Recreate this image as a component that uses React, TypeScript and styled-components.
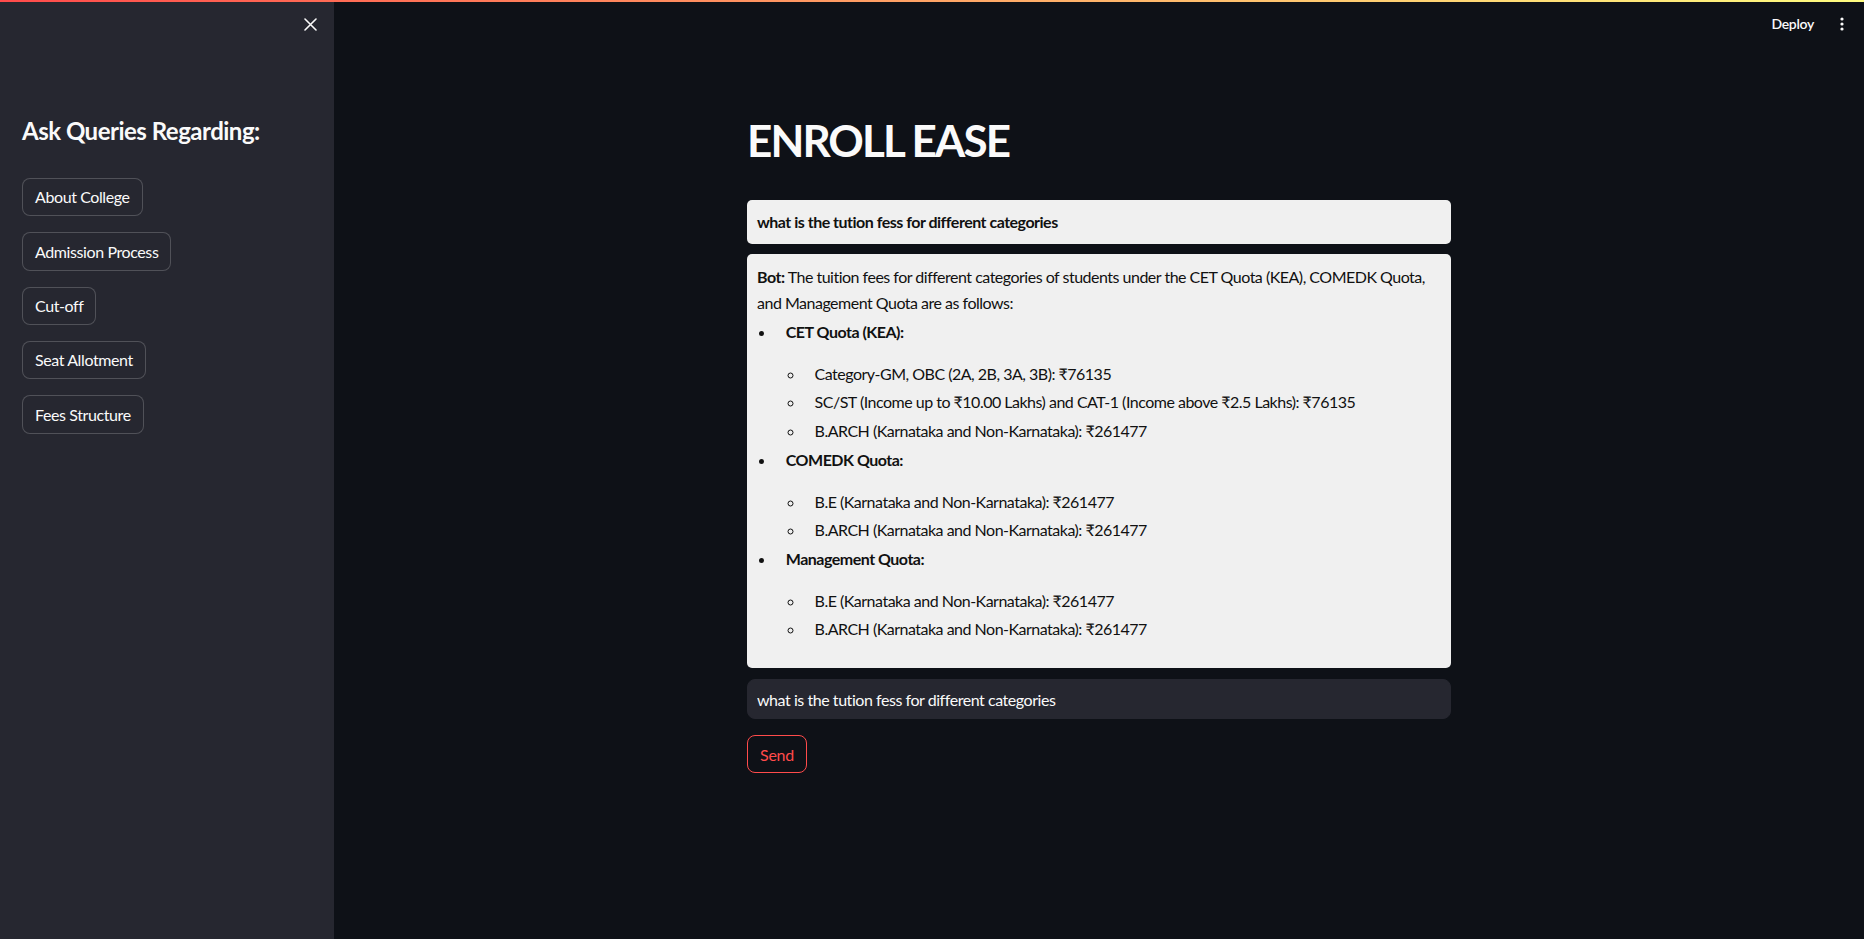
import React from "react";
import styled, { createGlobalStyle } from "styled-components";

const GlobalStyle = createGlobalStyle`
  html, body { margin: 0; padding: 0; height: 100%; }
  body {
    background: #0e1117;
    font-family: "Source Sans Pro", Lato, "Noto Sans", sans-serif;
    color: #fafafa;
    -webkit-font-smoothing: antialiased;
  }
  #root { height: 100%; }
  * { box-sizing: border-box; }
`;

const Shell = styled.div`
  position: relative;
  display: flex;
  height: 939px;
  width: 100%;
  overflow: hidden;
`;

const Decoration = styled.div`
  position: absolute;
  top: 0;
  left: 0;
  right: 0;
  height: 2px;
  background: linear-gradient(90deg, rgb(255, 75, 75), rgb(255, 253, 128));
  z-index: 5;
`;

const Sidebar = styled.aside`
  width: 334px;
  flex: 0 0 334px;
  background: #262730;
  display: flex;
  flex-direction: column;
`;

const SidebarTop = styled.div`
  height: 48px;
  display: flex;
  justify-content: flex-end;
  align-items: center;
  padding-right: 13px;
`;

const IconButton = styled.button`
  width: 22px;
  height: 22px;
  padding: 0;
  border: none;
  background: transparent;
  color: #fafafa;
  display: flex;
  align-items: center;
  justify-content: center;
  cursor: pointer;
`;

const SidebarContent = styled.div`
  padding: 69px 22px 0;
  display: flex;
  flex-direction: column;
`;

const SidebarHeading = styled.h3`
  margin: 0 0 32px;
  font-size: 24px;
  line-height: 28.8px;
  font-weight: 700;
  color: #fafafa;
  letter-spacing: -0.5px;
`;

const ButtonStack = styled.div`
  display: flex;
  flex-direction: column;
  align-items: flex-start;
  gap: 16px;
`;

const SideButton = styled.button`
  min-height: 38.4px;
  padding: 4px 12px;
  border-radius: 8px;
  border: 1px solid rgba(250, 250, 250, 0.2);
  background: #262730;
  color: #fafafa;
  font-family: inherit;
  font-size: 16px;
  line-height: 25.6px;
  cursor: pointer;
  letter-spacing: -0.4px;
`;

const Main = styled.main`
  flex: 1;
  display: flex;
  flex-direction: column;
  background: #0e1117;
`;

const Header = styled.header`
  height: 48px;
  display: flex;
  justify-content: flex-end;
  align-items: center;
  padding-right: 4px;
`;

const DeployButton = styled.button`
  border: none;
  background: transparent;
  color: #fafafa;
  font-family: inherit;
  font-size: 14px;
  font-weight: 600;
  padding: 0 10px;
  height: 32px;
  margin-top: -2px;
  cursor: pointer;
  letter-spacing: -0.3px;
`;

const MenuButton = styled.button`
  width: 36px;
  height: 32px;
  border: none;
  background: transparent;
  padding: 0;
  display: flex;
  align-items: center;
  justify-content: center;
  color: #fafafa;
`;

const Block = styled.section`
  width: 704px;
  margin: 0 auto;
  padding-top: 66px;
  display: flex;
  flex-direction: column;
`;

const Title = styled.h1`
  margin: 0 0 33px;
  font-size: 44px;
  line-height: 52.8px;
  font-weight: 700;
  color: #fafafa;
  letter-spacing: -1.9px;
`;

const Bubble = styled.div`
  background: #f0f0f0;
  border-radius: 5px;
  padding: 10px;
  margin-bottom: 10px;
  color: #111;
  font-size: 16px;
  letter-spacing: -0.5px;
`;

const UserText = styled.div`
  font-weight: 700;
  line-height: 24px;
`;

const BotPara = styled.p`
  margin: 0;
  line-height: 26px;
`;

const List = styled.ul<{ $nested?: boolean }>`
  margin: 0 0 ${(p) => (p.$nested ? "0" : "16px")};
  padding: 0;
  list-style-type: ${(p) => (p.$nested ? "circle" : "disc")};
`;

const Item = styled.li`
  margin: 3.2px 0 3.2px 19.2px;
  padding-left: 9.6px;
  line-height: 25.6px;
`;

const ItemLead = styled.p`
  margin: 0 0 16px;
  font-weight: 700;
`;

const Input = styled.input`
  width: 100%;
  height: 40px;
  border-radius: 8px;
  border: 1px solid #262730;
  background: #262730;
  color: #fafafa;
  font-family: inherit;
  font-size: 16px;
  padding: 0 9px;
  margin: 1px 0 16px;
  outline: none;
  letter-spacing: -0.45px;
`;

const SendButton = styled.button`
  align-self: flex-start;
  width: 60px;
  height: 38px;
  border-radius: 8px;
  border: 1px solid rgb(255, 75, 75);
  background: #0e1117;
  color: rgb(255, 75, 75);
  font-family: inherit;
  font-size: 16px;
  cursor: pointer;
  letter-spacing: -0.3px;
`;

const sidebarItems = ["About College", "Admission Process", "Cut-off", "Seat Allotment", "Fees Structure"];

const quotas: { name: string; items: string[] }[] = [
  {
    name: "CET Quota (KEA):",
    items: [
      "Category-GM, OBC (2A, 2B, 3A, 3B): ₹76135",
      "SC/ST (Income up to ₹10.00 Lakhs) and CAT-1 (Income above ₹2.5 Lakhs): ₹76135",
      "B.ARCH (Karnataka and Non-Karnataka): ₹261477",
    ],
  },
  {
    name: "COMEDK Quota:",
    items: ["B.E (Karnataka and Non-Karnataka): ₹261477", "B.ARCH (Karnataka and Non-Karnataka): ₹261477"],
  },
  {
    name: "Management Quota:",
    items: ["B.E (Karnataka and Non-Karnataka): ₹261477", "B.ARCH (Karnataka and Non-Karnataka): ₹261477"],
  },
];

const question = "what is the tution fess for different categories";

export default function App() {
  return (
    <>
      <GlobalStyle />
      <Shell>
        <Decoration />
        <Sidebar>
          <SidebarTop>
            <IconButton aria-label="Close sidebar">
              <svg width="13" height="13" viewBox="0 0 13 13">
                <path d="M1 1L12 12M12 1L1 12" stroke="#fafafa" strokeWidth="1.6" strokeLinecap="round" />
              </svg>
            </IconButton>
          </SidebarTop>
          <SidebarContent>
            <SidebarHeading>Ask Queries Regarding:</SidebarHeading>
            <ButtonStack>
              {sidebarItems.map((t) => (
                <SideButton key={t}>{t}</SideButton>
              ))}
            </ButtonStack>
          </SidebarContent>
        </Sidebar>
        <Main>
          <Header>
            <DeployButton>Deploy</DeployButton>
            <MenuButton aria-label="Menu">
              <svg width="4" height="14" viewBox="0 0 4 14">
                <circle cx="2" cy="2" r="1.6" fill="#fafafa" />
                <circle cx="2" cy="7" r="1.6" fill="#fafafa" />
                <circle cx="2" cy="12" r="1.6" fill="#fafafa" />
              </svg>
            </MenuButton>
          </Header>
          <Block>
            <Title>ENROLL EASE</Title>
            <Bubble>
              <UserText>{question}</UserText>
            </Bubble>
            <Bubble>
              <BotPara>
                <b>Bot:</b> The tuition fees for different categories of students under the CET Quota (KEA), COMEDK Quota,
                <br />
                and Management Quota are as follows:
              </BotPara>
              <List>
                {quotas.map((q) => (
                  <Item key={q.name}>
                    <ItemLead>{q.name}</ItemLead>
                    <List $nested>
                      {q.items.map((it, i) => (
                        <Item key={i}>{it}</Item>
                      ))}
                    </List>
                  </Item>
                ))}
              </List>
            </Bubble>
            <Input defaultValue={question} />
            <SendButton>Send</SendButton>
          </Block>
        </Main>
      </Shell>
    </>
  );
}
